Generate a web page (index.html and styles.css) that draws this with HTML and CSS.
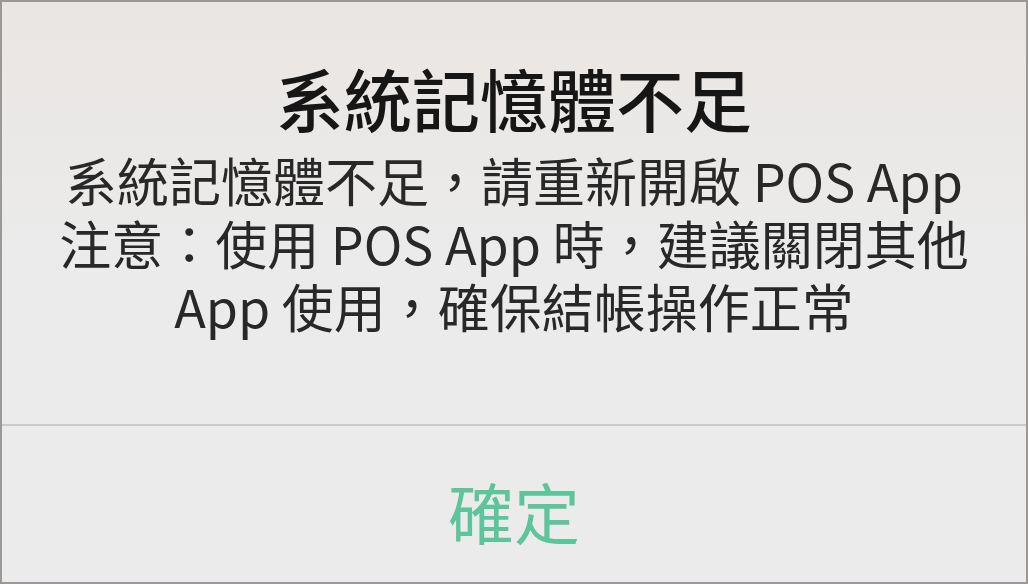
FILE: index.html
```html
<!DOCTYPE html>
<html lang="zh-Hant">
<head>
  <meta charset="UTF-8" />
  <meta name="viewport" content="width=device-width, initial-scale=1.0" />
  <title>系統記憶體不足</title>
  <link rel="stylesheet" href="styles.css">
</head>
<body>
  <div class="alert">
    <div class="alert-body">
      <h1 class="alert-title">系統記憶體不足</h1>
      <p class="alert-message">系統記憶體不足，請重新開啟 POS App<br>注意：使用 POS App 時，建議關閉其他<br>App 使用，確保結帳操作正常</p>
    </div>
    <button class="alert-button" type="button">確定</button>
  </div>
</body>
</html>
```

FILE: styles.css
```css
* {
  margin: 0;
  padding: 0;
  box-sizing: border-box;
}
html, body {
  height: 100%;
}
body {
  font-family: "Noto Sans CJK TC", "Noto Sans", sans-serif;
  background: #ebebeb;
}
.alert {
  height: 100%;
  display: flex;
  flex-direction: column;
  border: 2px solid #9c9896;
  background: linear-gradient(to bottom, #eae6e3, #ebebeb 45%, #ebebeb);
}
.alert-body {
  height: 424px;
  padding-top: 56px;
  text-align: center;
  border-bottom: 2px solid #c9c9c9;
}
.alert-title {
  font-size: 68px;
  font-weight: 500;
  line-height: 80px;
  color: #161616;
}
.alert-message {
  margin-top: 10px;
  font-size: 52px;
  line-height: 63px;
  color: #282828;
}
.alert-button {
  flex: 1;
  padding-top: 12px;
  border: none;
  background: transparent;
  font-family: inherit;
  font-size: 66px;
  color: #5dc49b;
  cursor: pointer;
}
```
